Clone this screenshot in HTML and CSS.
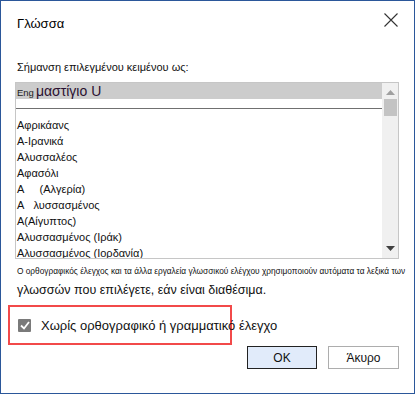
FILE: index.html
```html
<!DOCTYPE html>
<html lang="el">
<head>
<meta charset="utf-8">
<title>Γλώσσα</title>
<link rel="stylesheet" href="styles.css">
</head>
<body>
<div class="dialog">
  <div class="titlebar">
    <span class="title">Γλώσσα</span>
    <svg class="close" width="14" height="14" viewBox="0 0 14 14"><path d="M0.5 0.5 L13.5 13.5 M13.5 0.5 L0.5 13.5" stroke="#333" stroke-width="1.1" fill="none"/></svg>
  </div>
  <div class="label">Σήμανση επιλεγμένου κειμένου ως:</div>
  <div class="listbox">
    <div class="items">
      <div class="selected"><span class="eng">Eng</span><span class="sel-text">μαστίγιο U</span></div>
      <div class="sep"></div>
      <div class="item">Αφρικάανς</div>
      <div class="item">Α-Ιρανικά</div>
      <div class="item">Αλυσσαλέος</div>
      <div class="item">Αφασόλι</div>
      <div class="item">Α&nbsp;&nbsp;&nbsp;&nbsp;&nbsp;(Αλγερία)</div>
      <div class="item">Α&nbsp;&nbsp;&nbsp;λυσσασμένος</div>
      <div class="item">Α(Αίγυπτος)</div>
      <div class="item">Αλυσσασμένος (Ιράκ)</div>
      <div class="item">Αλυσσασμένος (Ιορδανία)</div>
    </div>
    <div class="scrollbar">
      <svg class="arrow" width="9" height="5" viewBox="0 0 9 5"><path d="M0 5 L4.5 0 L9 5 Z" fill="#a0a0a0"/></svg>
      <div class="thumb"></div>
      <div class="track"></div>
      <svg class="arrow" width="9" height="5" viewBox="0 0 9 5"><path d="M0 0 L9 0 L4.5 5 Z" fill="#404040"/></svg>
    </div>
  </div>
  <div class="desc small">Ο ορθογραφικός έλεγχος και τα άλλα εργαλεία γλωσσικού ελέγχου χρησιμοποιούν αυτόματα τα λεξικά των</div>
  <div class="desc big">γλωσσών που επιλέγετε, εάν είναι διαθέσιμα.</div>
  <div class="highlight">
    <span class="checkbox"><svg width="10" height="9" viewBox="0 0 10 9"><path d="M1 4.5 L4 7.5 L9 1" stroke="#fff" stroke-width="1.8" fill="none"/></svg></span>
    <span class="check-label">Χωρίς ορθογραφικό ή γραμματικό έλεγχο</span>
  </div>
  <div class="buttons">
    <button class="btn primary">OK</button>
    <button class="btn">Άκυρο</button>
  </div>
</div>
</body>
</html>
```
FILE: styles.css
```css
html, body {
  margin: 0;
  padding: 0;
  background: #fff;
}
.dialog {
  width: 415px;
  height: 394px;
  box-sizing: border-box;
  border: 1px solid #2b579a;
  font-family: "Liberation Sans", Arial, sans-serif;
  color: #000;
  display: flex;
  flex-direction: column;
  padding: 0 15px 0 14px;
}
.titlebar {
  height: 44px;
  display: flex;
  align-items: center;
  justify-content: space-between;
  padding-left: 2px;
  padding-right: 1px;
  flex-shrink: 0;
}
.title {
  font-size: 13px;
}
.close {
  margin-top: -6px;
}
.label {
  font-size: 11px;
  color: #111;
  margin-top: 16px;
  padding-left: 2px;
  line-height: 13px;
  flex-shrink: 0;
}
.listbox {
  margin-top: 8px;
  height: 177px;
  border: 1px solid #c6c6c6;
  display: flex;
  box-sizing: border-box;
  flex-shrink: 0;
  overflow: hidden;
}
.items {
  flex: 1;
  display: flex;
  flex-direction: column;
}
.selected {
  background: #cccccc;
  height: 16px;
  flex-shrink: 0;
  display: flex;
  align-items: baseline;
  padding-left: 1px;
}
.eng {
  font-size: 9.5px;
  line-height: 16px;
  color: #222;
}
.sel-text {
  font-size: 14px;
  line-height: 17px;
  color: #2a1030;
  margin-left: 2px;
}
.sep {
  height: 1px;
  flex-shrink: 0;
  background: #707070;
  margin-top: 9px;
  margin-bottom: 8px;
}
.item {
  font-size: 11px;
  line-height: 16px;
  height: 16px;
  flex-shrink: 0;
  padding-left: 1px;
  color: #111;
  white-space: nowrap;
}
.scrollbar {
  width: 16px;
  background: #f0f0f0;
  display: flex;
  flex-direction: column;
  align-items: center;
  padding: 7px 0 7px;
  box-sizing: border-box;
}
.arrow {
  flex-shrink: 0;
}
.thumb {
  width: 13px;
  height: 17px;
  background: #c3c3c3;
  margin-top: 4px;
}
.track {
  flex: 1;
}
.desc {
  padding-left: 2px;
  white-space: nowrap;
  color: #111;
  flex-shrink: 0;
}
.desc.small {
  font-size: 8.3px;
  margin-top: 6px;
  line-height: 12px;
}
.desc.big {
  font-size: 12.5px;
  margin-top: 5px;
  line-height: 16px;
}
.highlight {
  margin-top: 7px;
  margin-left: -7px;
  width: 224px;
  height: 40px;
  box-sizing: border-box;
  border: 2px solid #f24a4a;
  display: flex;
  align-items: center;
  flex-shrink: 0;
}
.checkbox {
  width: 13px;
  height: 13px;
  background: #7a7a7a;
  border-radius: 1px;
  margin-left: 8px;
  display: flex;
  align-items: center;
  justify-content: center;
  flex-shrink: 0;
}
.check-label {
  font-size: 13px;
  margin-left: 10px;
  white-space: nowrap;
  color: #111;
}
.buttons {
  display: flex;
  justify-content: flex-end;
  gap: 11px;
  margin-top: 1px;
}
.btn {
  width: 71px;
  height: 23px;
  box-sizing: border-box;
  background: #fff;
  border: 1px solid #adadad;
  font-family: "Liberation Sans", Arial, sans-serif;
  font-size: 12px;
  color: #111;
  padding: 0;
}
.btn.primary {
  background: #e1ebfa;
  border: 1px solid #222;
  width: 70px;
}
```
